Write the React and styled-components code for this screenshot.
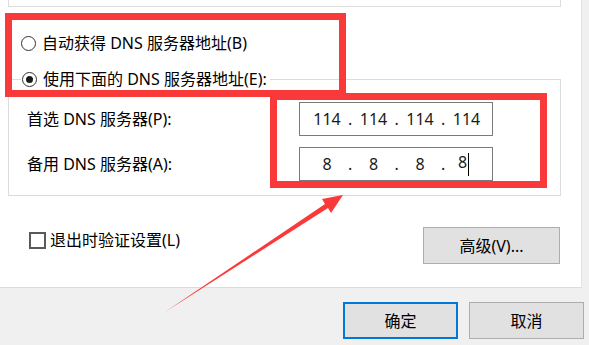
import React from "react";
import styled, { createGlobalStyle } from "styled-components";

const GlobalStyle = createGlobalStyle`
  html, body {
    margin: 0;
    padding: 0;
    background: #f0f0f0;
  }
  * {
    box-sizing: border-box;
  }
`;

const font = `"Noto Sans", "Noto Sans CJK SC", sans-serif`;

const Page = styled.div`
  position: relative;
  width: 589px;
  height: 345px;
  overflow: hidden;
  background: #f0f0f0;
  display: grid;
  grid-template-columns: 582px 1fr;
  grid-template-rows: 288px 1fr;
  font-family: ${font};
  font-size: 16px;
  color: #000;
`;

const Panel = styled.div`
  grid-column: 1;
  grid-row: 1;
  background: #fff;
  border-right: 1px solid #e3e3e3;
  border-bottom: 1px solid #dcdcdc;
  display: flex;
  flex-direction: column;
`;

const TopBox = styled.div`
  height: 7px;
  margin: 0 20px 0 8px;
  border: 1px solid #dcdcdc;
  border-top: none;
`;

const RadioLabel = styled.label`
  display: flex;
  align-items: center;
  gap: 6px;
  height: 20px;
  line-height: 20px;
  white-space: nowrap;
  margin: ${(p) => p.$margin || "0"};
`;

const RadioCircle = styled.span`
  position: relative;
  width: 15px;
  height: 15px;
  border-radius: 50%;
  border: 1px solid #333;
  background: #fff;
  flex: none;

  &::after {
    content: "";
    display: ${(p) => (p.$checked ? "block" : "none")};
    position: absolute;
    left: 3px;
    top: 3px;
    width: 7px;
    height: 7px;
    border-radius: 50%;
    background: #1a1a1a;
  }
`;

const Group = styled.fieldset`
  margin: 16px 20px 0 8px;
  padding: 0;
  border: 1px solid #dcdcdc;
  min-width: 0;
`;

const Legend = styled.legend`
  margin-left: 12px;
  padding: 0 3px 0 1px;
  height: 20px;
`;

const Fields = styled.div`
  display: grid;
  grid-template-columns: 272px 194px;
  row-gap: 11px;
  align-items: center;
  margin: 13px 0 14px 18px;
`;

const FieldLabel = styled.span`
  line-height: 20px;
  white-space: nowrap;
`;

const IpInput = styled.div`
  height: 34px;
  border: 1px solid #7a7a7a;
  background: #fff;
  display: flex;
  align-items: center;
  padding-left: 10px;
  color: #1a1a1a;
  line-height: 20px;
`;

const Octet = styled.span`
  width: 34px;
  text-align: center;
  padding-right: ${(p) => (p.$editing ? "6px" : "0")};
`;

const Dot = styled.span`
  width: 12.5px;
  text-align: center;
`;

const Caret = styled.span`
  display: inline-block;
  width: 1px;
  height: 23px;
  margin-left: 1px;
  background: #000;
  vertical-align: middle;
`;

const OptionsRow = styled.div`
  display: flex;
  justify-content: space-between;
  align-items: flex-start;
  margin: 31px 21px 0 29px;
`;

const CheckLabel = styled.label`
  display: flex;
  align-items: center;
  gap: 4px;
  margin-top: 3px;
  height: 20px;
  line-height: 20px;
`;

const CheckBox = styled.span`
  width: 17px;
  height: 17px;
  border: 2px solid #5a5a5a;
  background: #fff;
  flex: none;
`;

const Button = styled.button`
  width: ${(p) => p.$width || 115}px;
  height: 37px;
  background: #e1e1e1;
  border: ${(p) => (p.$primary ? "2px solid #0078d7" : "1px solid #adadad")};
  font-family: ${font};
  font-size: 16px;
  color: #000;
  padding: 0;
  line-height: 20px;
`;

const Footer = styled.div`
  grid-column: 1 / -1;
  grid-row: 2;
  display: flex;
  justify-content: flex-end;
  align-items: flex-start;
  gap: 11px;
  padding: 14px 5px 0 0;
`;

const Highlight = styled.div`
  position: absolute;
  left: ${(p) => p.$x}px;
  top: ${(p) => p.$y}px;
  width: ${(p) => p.$w}px;
  height: ${(p) => p.$h}px;
  border: 7px solid #fa3a3a;
  pointer-events: none;
`;

const Overlay = styled.svg`
  position: absolute;
  left: 0;
  top: 0;
  pointer-events: none;
`;

const Ip = ({ parts, editing }) => (
  <IpInput>
    {parts.map((p, i) => (
      <React.Fragment key={i}>
        {i > 0 && <Dot>.</Dot>}
        <Octet $editing={editing && i === parts.length - 1}>
          {p}
          {editing && i === parts.length - 1 && <Caret />}
        </Octet>
      </React.Fragment>
    ))}
  </IpInput>
);

export default function App() {
  return (
    <>
      <GlobalStyle />
      <Page>
        <Panel>
          <TopBox />
          <RadioLabel $margin="26px 0 0 21px">
            <RadioCircle />
            自动获得 DNS 服务器地址(B)
          </RadioLabel>
          <Group>
            <Legend>
              <RadioLabel>
                <RadioCircle $checked />
                使用下面的 DNS 服务器地址(E):
              </RadioLabel>
            </Legend>
            <Fields>
              <FieldLabel>首选 DNS 服务器(P):</FieldLabel>
              <Ip parts={["114", "114", "114", "114"]} />
              <FieldLabel>备用 DNS 服务器(A):</FieldLabel>
              <Ip parts={["8", "8", "8", "8"]} editing />
            </Fields>
          </Group>
          <OptionsRow>
            <CheckLabel>
              <CheckBox />
              退出时验证设置(L)
            </CheckLabel>
            <Button $width={137}>高级(V)...</Button>
          </OptionsRow>
        </Panel>
        <Footer>
          <Button $primary>确定</Button>
          <Button>取消</Button>
        </Footer>

        <Highlight $x={5} $y={13} $w={341} $h={84} />
        <Highlight $x={270} $y={93} $w={277} $h={95} />
        <Overlay width="589" height="345" viewBox="0 0 589 345">
          <polygon
            points="165,312 325,204 322,199 343,195 331,213 328,208"
            fill="#fa3a3a"
          />
        </Overlay>
      </Page>
    </>
  );
}
